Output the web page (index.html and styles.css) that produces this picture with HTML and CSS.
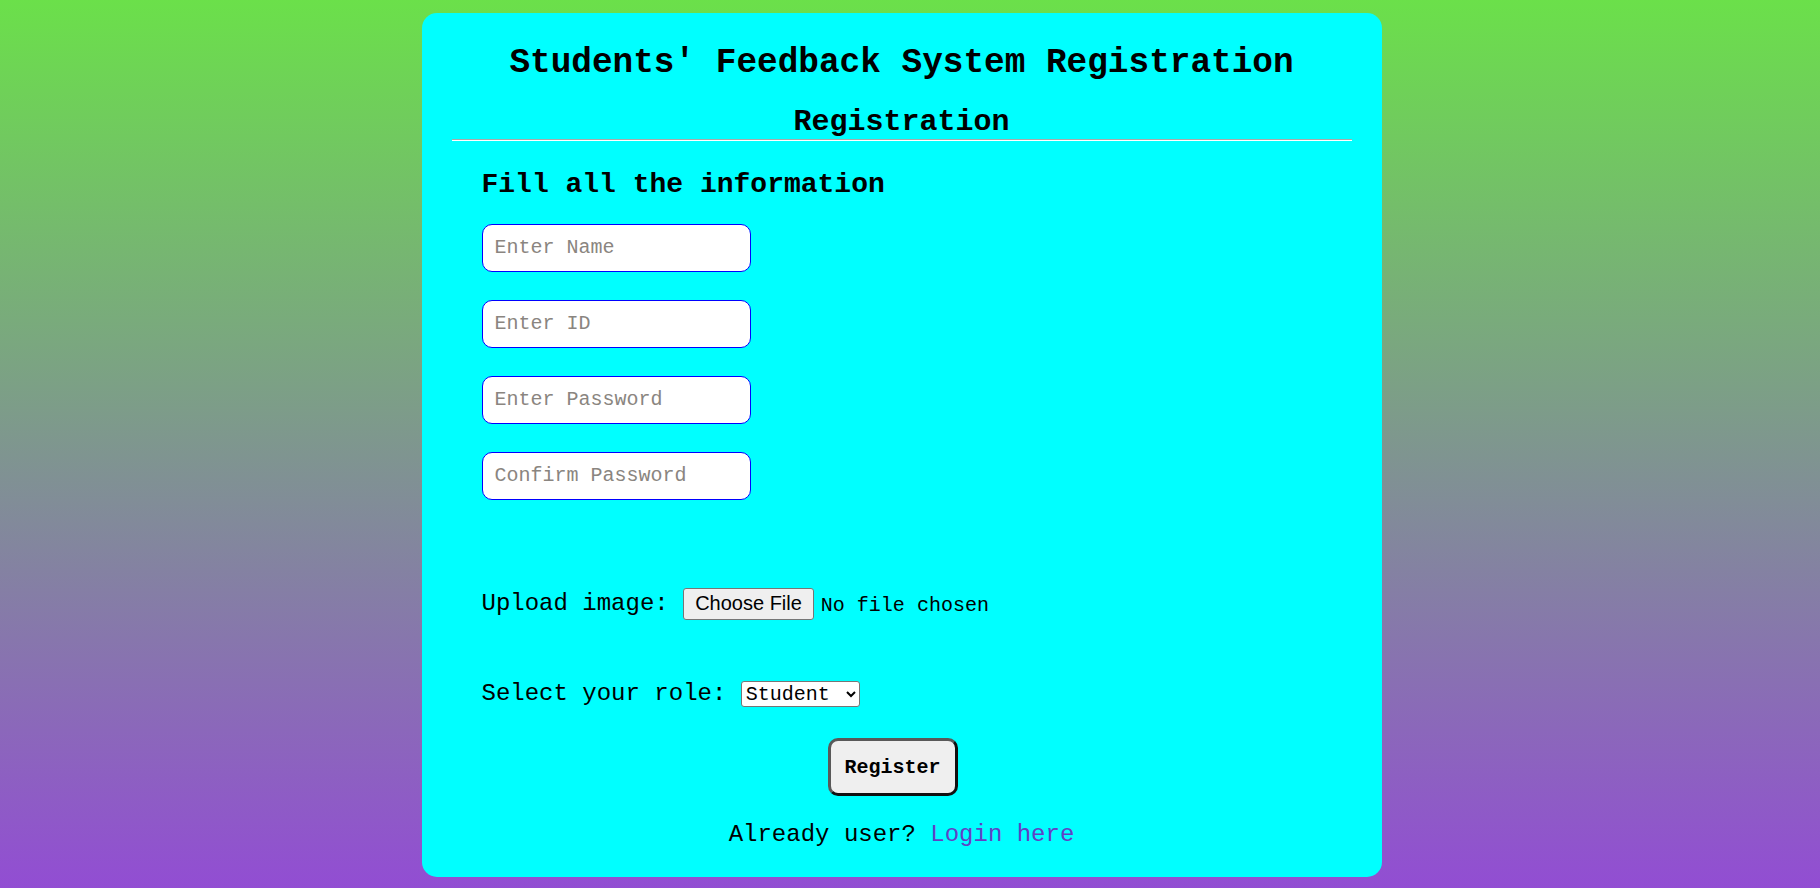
FILE: index.html
```html
<!DOCTYPE html>
<html lang="en">
<head>
<meta charset="utf-8">
<title>Students' Feedback System Registration</title>
<link rel="stylesheet" href="styles.css">
</head>
<body>
<div class="card">
  <h1 class="title">Students' Feedback System Registration</h1>
  <h2 class="subtitle">Registration</h2>
  <hr class="rule">
  <form class="form">
    <h3 class="form-heading">Fill all the information</h3>
    <div class="fields">
      <input class="field" type="text" placeholder="Enter Name">
      <input class="field" type="text" placeholder="Enter ID">
      <input class="field" type="password" placeholder="Enter Password">
      <input class="field" type="password" placeholder="Confirm Password">
    </div>
    <div class="row upload-row"><span class="label upload-label">Upload image:&nbsp;</span><input class="file" type="file"></div>
    <div class="row role-row"><span class="label role-label">Select your role:&nbsp;</span><select class="role"><option>Student</option><option>Teacher</option></select></div>
    <div class="actions"><button class="register" type="button">Register</button></div>
  </form>
  <p class="login">Already user? <a class="login-link" href="#">Login here</a></p>
</div>
</body>
</html>
```
FILE: styles.css
```css
html, body {
  margin: 0;
  height: 888px;
}
body {
  padding-right: 17px;
  background: linear-gradient(to bottom, #6be04a, #924dd3);
  font-family: "Liberation Mono", "Courier New", monospace;
  color: #000;
  overflow: hidden;
}
.card {
  width: 900px;
  margin: 13px auto 0;
  padding: 30px 30px 28px;
  background: #00ffff;
  border-radius: 15px;
}
.title {
  margin: 0;
  font-size: 34.4px;
  line-height: 40px;
  font-weight: bold;
  text-align: center;
}
.subtitle {
  margin: 22px 0 0;
  font-size: 30px;
  line-height: 34px;
  font-weight: bold;
  text-align: center;
}
.rule {
  margin: 0;
  height: 0;
  border: 0;
  border-top: 1px solid #a9a9a9;
  border-bottom: 1px solid #ffffff;
}
.form {
  display: flex;
  flex-direction: column;
  align-items: flex-start;
  padding: 0 48px 0 30px;
}
.form-heading {
  margin: 28px 0 0;
  font-size: 28px;
  line-height: 32px;
  font-weight: bold;
}
.fields {
  display: flex;
  flex-direction: column;
  gap: 28px;
  margin-top: 22.5px;
}
.field {
  box-sizing: border-box;
  width: 269px;
  height: 48px;
  margin: 0;
  padding: 0 12px;
  border: 1px solid #0000ff;
  border-radius: 10px;
  background: #fff;
  font-family: "Liberation Mono", "Courier New", monospace;
  font-size: 20px;
  outline: none;
}
.field::placeholder {
  color: #8a8580;
}
.row {
  display: flex;
  align-items: center;
}
.label {
  font-size: 24px;
}
.upload-label {
  line-height: 32px;
}
.role-label {
  line-height: 26px;
}
.upload-row {
  margin-top: 88px;
}
.file {
  font-family: "Liberation Mono", "Courier New", monospace;
  font-size: 20px;
  color: #000;
}
.file::file-selector-button {
  box-sizing: border-box;
  height: 32px;
  margin: 0 7px 0 0;
  padding: 0 11px;
  border: 1px solid #767676;
  border-radius: 3px;
  background: #efefef;
  color: #000;
  font-family: "Liberation Sans", Arial, sans-serif;
  font-size: 20px;
}
.role-row {
  margin-top: 61.7px;
}
.role {
  box-sizing: border-box;
  width: 119px;
  height: 26px;
  border: 1px solid #767676;
  border-radius: 3px;
  background: #fff;
  color: #000;
  font-family: "Liberation Mono", "Courier New", monospace;
  font-size: 20px;
}
.actions {
  align-self: stretch;
  display: flex;
  justify-content: center;
  margin-top: 31px;
}
.register {
  box-sizing: border-box;
  width: 130px;
  height: 58px;
  border: 3px solid;
  border-color: #595959 #111 #111 #595959;
  border-radius: 10px;
  background: #efefef;
  color: #000;
  font-family: "Liberation Mono", "Courier New", monospace;
  font-size: 20px;
  font-weight: bold;
}
.login {
  margin: 25.3px 0 0;
  font-size: 24px;
  line-height: 28px;
  text-align: center;
}
.login-link {
  color: #6240c4;
  text-decoration: none;
}
```
